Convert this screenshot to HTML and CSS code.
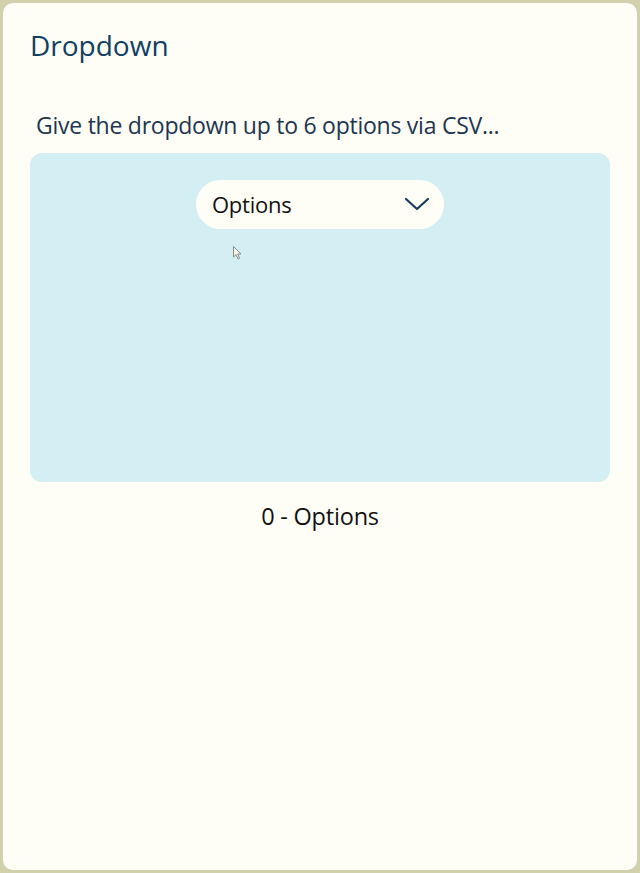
FILE: index.html
```html
<!DOCTYPE html>
<html>
<head>
<meta charset="utf-8">
<link rel="stylesheet" href="styles.css">
</head>
<body>
<div class="card">
  <h1 class="title">Dropdown</h1>
  <p class="hint">Give the dropdown up to 6 options via CSV...</p>
  <div class="panel">
    <div class="select">
      <span class="select-label">Options</span>
      <svg class="chevron" width="26" height="16" viewBox="0 0 26 16"><path d="M2 3 L13 13 L24 3" fill="none" stroke="#1b3a5c" stroke-width="2.2" stroke-linecap="round" stroke-linejoin="round"/></svg>
    </div>
    <svg class="cursor" width="12" height="16" viewBox="0 0 12 16"><path d="M1.5 1.5 L1.5 12 L4 9.6 L6 14 L7.6 13.3 L5.7 9 L9 9 Z" fill="#f4f4ec" stroke="#8a8a8a" stroke-width="1" stroke-linejoin="round"/></svg>
  </div>
  <p class="count">0 - Options</p>
</div>
</body>
</html>
```
FILE: styles.css
```css
html, body {
  margin: 0;
  padding: 0;
}
body {
  background: #d2d1ad;
  font-family: "Open Sans", "Noto Sans", sans-serif;
  padding: 3px;
  box-sizing: border-box;
  height: 873px;
}
.card {
  background: #fffef6;
  border-radius: 10px;
  height: 867px;
  box-sizing: border-box;
  padding: 24px 27px 0 27px;
  display: flex;
  flex-direction: column;
}
.title {
  margin: 0 0 0 0;
  font-weight: 400;
  font-size: 28px;
  line-height: 36px;
  color: #123f62;
  letter-spacing: 0;
}
.hint {
  margin: 48px 0 0 6px;
  font-size: 23px;
  line-height: 28px;
  color: #1d3550;
  letter-spacing: -0.25px;
}
.panel {
  margin-top: 14px;
  height: 329px;
  background: #d3eff3;
  border-radius: 12px;
  position: relative;
  display: flex;
  justify-content: center;
  align-items: flex-start;
  padding-top: 27px;
  box-sizing: border-box;
}
.select {
  width: 248px;
  height: 49px;
  box-sizing: border-box;
  background: #fffef6;
  border-radius: 25px;
  display: flex;
  align-items: center;
  justify-content: space-between;
  padding: 0 14px 2px 16px;
}
.select-label {
  font-size: 22px;
  color: #111;
  letter-spacing: -0.25px;
}
.chevron {
  display: block;
  margin-top: 1px;
}
.cursor {
  position: absolute;
  left: 202px;
  top: 92px;
}
.count {
  margin: 20px 0 0 0;
  text-align: center;
  font-size: 23.5px;
  line-height: 28px;
  color: #111;
  letter-spacing: -0.2px;
}
```
